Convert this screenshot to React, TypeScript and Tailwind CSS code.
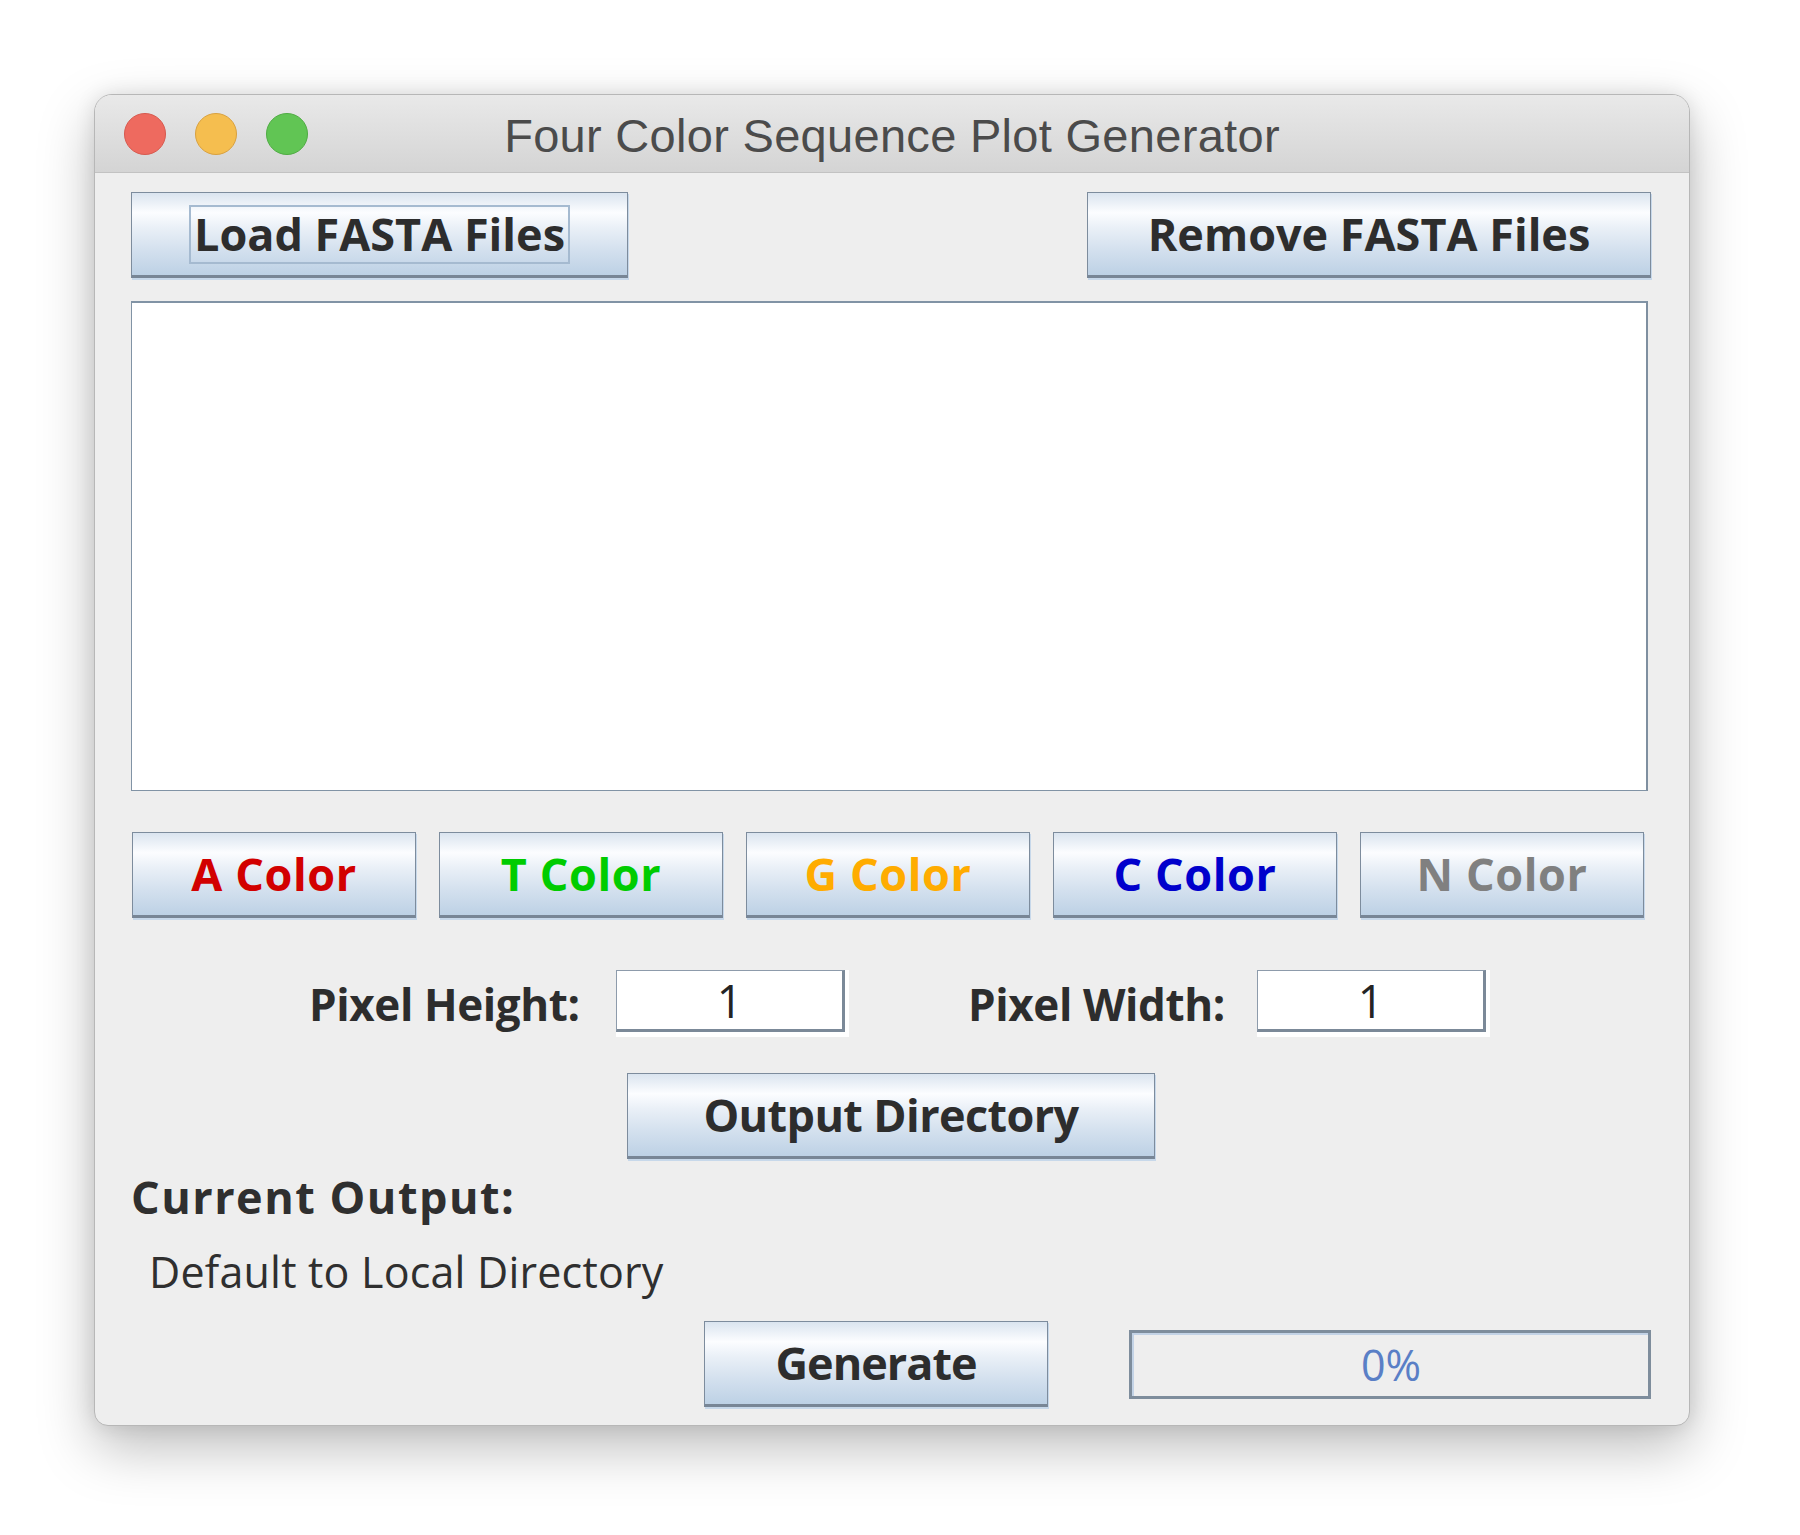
import React from "react";

const btn =
  "flex items-center justify-center border border-[#7d8c9d] border-b-[3px] border-b-[#788696] bg-[linear-gradient(to_bottom,#dae4ef_0%,#fcfdff_24%,#eaf0f7_42%,#d3e0ee_70%,#bdd1e5_100%)] shadow-[1px_2px_0_#c7d8ea] font-bold text-[45px] whitespace-nowrap";

function Light({ bg, border }: { bg: string; border: string }) {
  return <span className={`w-[42px] h-[42px] rounded-full border ${bg} ${border}`} />;
}

function Field() {
  return (
    <div className="bg-white pr-[4px] pb-[5px]">
      <div className="w-[229px] h-[62px] border-t border-l border-[#8d9bab] border-r-[3px] border-b-[3px] border-r-[#7b8998] border-b-[#7b8998] bg-white flex items-center justify-center pt-[2px] text-[45px] text-[#242424]">
        1
      </div>
    </div>
  );
}

export default function App() {
  return (
    <div className="w-[1800px] h-[1535px] bg-white pt-[94px] pl-[94px] font-['Open_Sans',sans-serif]">
      <div className="w-[1596px] h-[1332px] rounded-t-[18px] rounded-b-[14px] border border-[#b7b7b7] bg-[#eeeeee] shadow-[0_22px_55px_rgba(0,0,0,0.26),0_0_20px_rgba(0,0,0,0.10)] overflow-hidden flex flex-col">
        {/* title bar */}
        <div className="h-[78px] shrink-0 grid grid-cols-[1fr_auto_1fr] items-center bg-[linear-gradient(to_bottom,#e9e9e9,#d4d4d4)] border-b border-[#c2c2c2]">
          <div className="flex items-center gap-[29px] pl-[29px]">
            <Light bg="bg-[#ee6a5f]" border="border-[#d7594e]" />
            <Light bg="bg-[#f5be4f]" border="border-[#d9a13f]" />
            <Light bg="bg-[#61c554]" border="border-[#4fac43]" />
          </div>
          <div className="font-['Liberation_Sans',Arial,sans-serif] text-[47px] tracking-[0.3px] leading-none text-[#4b4b4b] pt-[3px]">
            Four Color Sequence Plot Generator
          </div>
          <div />
        </div>

        {/* body */}
        <div className="flex flex-col pl-[36px] pr-[38px] pt-[19px]">
          <div className="flex justify-between">
            <button className={`${btn} w-[497px] h-[86px] text-[#2d2d2d]`}>
              <span className="h-[59px] flex items-center border-2 border-[#a5bad0] px-[3px]">Load FASTA Files</span>
            </button>
            <button className={`${btn} w-[564px] h-[86px] text-[#2d2d2d]`}>Remove FASTA Files</button>
          </div>

          <div className="mt-[23px] w-[1517px] h-[490px] bg-white border border-[#8193a5] border-t-2 border-r-2 border-r-[#7f8fa0]" />

          <div className="mt-[41px] ml-[1px] flex gap-[23px] tracking-[0.6px]">
            <button className={`${btn} w-[284px] h-[86px] text-[#d20000]`}>A Color</button>
            <button className={`${btn} w-[284px] h-[86px] text-[#00cc00]`}>T Color</button>
            <button className={`${btn} w-[284px] h-[86px] text-[#ffac00]`}>G Color</button>
            <button className={`${btn} w-[284px] h-[86px] text-[#0000cc]`}>C Color</button>
            <button className={`${btn} w-[284px] h-[86px] text-[#808080]`}>N Color</button>
          </div>

          <div className="mt-[52px] flex items-center pl-[178px] text-[44px] tracking-[-0.4px] font-bold text-[#2d2d2d]">
            <span className="w-[271px] whitespace-nowrap">Pixel Height:</span>
            <div className="ml-[36px] font-normal tracking-normal">
              <Field />
            </div>
            <span className="ml-[119px] w-[252px] whitespace-nowrap">Pixel Width:</span>
            <div className="ml-[37px] font-normal tracking-normal">
              <Field />
            </div>
          </div>

          <div className="mt-[36px] flex justify-center">
            <button className={`${btn} w-[528px] h-[86px] text-[#2d2d2d] tracking-[-0.6px]`}>Output Directory</button>
          </div>

          <div className="mt-[14px] h-[48px] leading-[48px] text-[45px] tracking-[1.5px] font-bold text-[#2f2f2f] whitespace-nowrap">
            Current Output:
          </div>
          <div className="mt-[27px] h-[48px] leading-[48px] text-[43px] tracking-[0.2px] pl-[18px] text-[#2f2f2f] whitespace-nowrap">
            Default to Local Directory
          </div>

          <div className="mt-[25px] flex justify-end items-center gap-[81px]">
            <button className={`${btn} w-[344px] h-[86px] text-[#2d2d2d] tracking-[-1px]`}>Generate</button>
            <div className="w-[522px] h-[69px] border-[3px] border-[#7e8d9c] bg-[#eeeeee] flex items-center justify-center">
              <div className="w-full h-full border-l-2 border-t-2 border-[#c3d3e6] flex items-center justify-center text-[43px] text-[#5a7fc6]">
                0%
              </div>
            </div>
          </div>
        </div>
      </div>
    </div>
  );
}
